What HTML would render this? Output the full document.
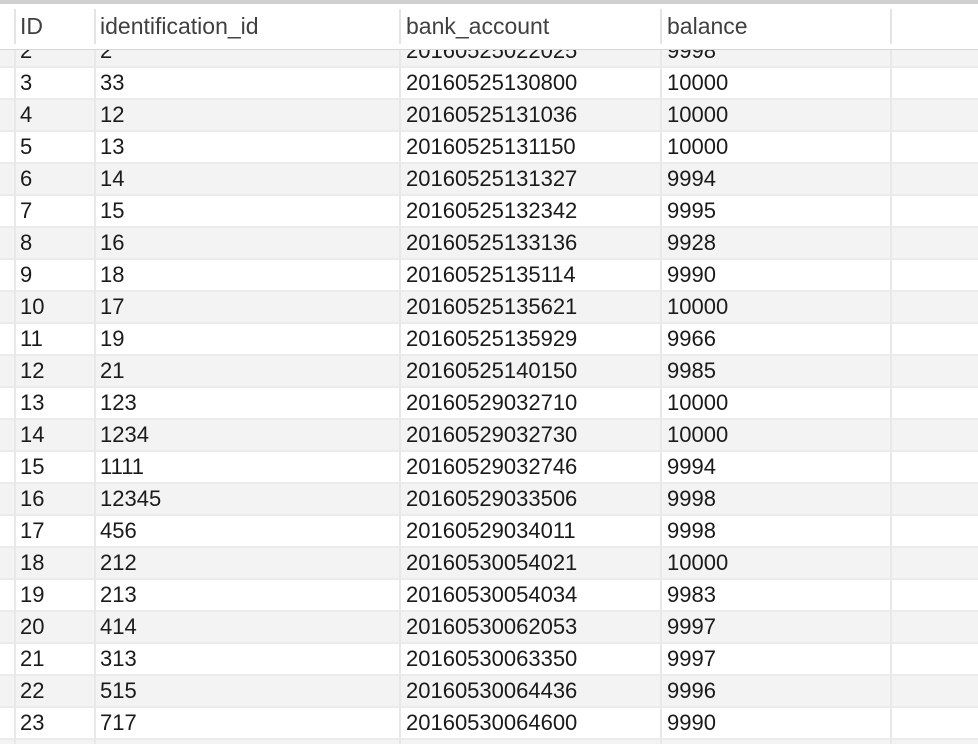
<!DOCTYPE html>
<html><head><style>
html,body{margin:0;width:978px;height:744px;overflow:hidden}
body{background:#fff;font-family:"Liberation Sans",Arial,sans-serif;font-size:22px;color:#1a1a1a;position:relative}
.top{position:absolute;left:0;top:0;width:978px;height:4px;background:#d0d0d0}
.hdr{position:absolute;left:0;top:4px;width:978px;height:45px;background:#fff;border-bottom:1px solid #d6d6d6}
.hs{position:absolute;top:5px;width:2px;height:35px;background:#e4e4e4}
.ht{position:absolute;top:9px;color:#404040;font-size:23px;line-height:26px}
.row{position:absolute;left:0;width:978px;height:30px}
.row span{position:absolute;top:3px;line-height:24px}
.g{background:#f3f3f3}
.vl{position:absolute;top:50px;width:2px;height:694px;background:#e8e8e8}
.sep{position:absolute;left:0;width:978px;height:2px;background:#ebebeb}
</style></head><body>
<div class="top"></div>
<div id="rows"></div>
<div class="hdr">
<div class="hs" style="left:14px"></div><div class="hs" style="left:94px"></div><div class="hs" style="left:399px"></div><div class="hs" style="left:660px"></div><div class="hs" style="left:890px"></div>
<div class="ht" style="left:20px">ID</div><div class="ht" style="left:100px">identification_id</div><div class="ht" style="left:406px">bank_account</div><div class="ht" style="left:667px">balance</div>
</div>
<script>
var d=[[2,2,"20160525022025",9998],[3,33,"20160525130800",10000],[4,12,"20160525131036",10000],[5,13,"20160525131150",10000],[6,14,"20160525131327",9994],[7,15,"20160525132342",9995],[8,16,"20160525133136",9928],[9,18,"20160525135114",9990],[10,17,"20160525135621",10000],[11,19,"20160525135929",9966],[12,21,"20160525140150",9985],[13,123,"20160529032710",10000],[14,1234,"20160529032730",10000],[15,1111,"20160529032746",9994],[16,12345,"20160529033506",9998],[17,456,"20160529034011",9998],[18,212,"20160530054021",10000],[19,213,"20160530054034",9983],[20,414,"20160530062053",9997],[21,313,"20160530063350",9997],[22,515,"20160530064436",9996],[23,717,"20160530064600",9990],["","","",""]];
var h="";
d.forEach(function(r,i){var top=36+i*32;var cls=(i%2==0)?"row g":"row";
h+='<div class="'+cls+'" style="top:'+top+'px"><span style="left:20px">'+r[0]+'</span><span style="left:100px">'+r[1]+'</span><span style="left:406px">'+r[2]+'</span><span style="left:667px">'+r[3]+'</span></div>';
if(i<22)h+='<div class="sep" style="top:'+(top+30)+'px"></div>';});
[14,94,399,660,890].forEach(function(x){h+='<div class="vl" style="left:'+x+'px"></div>'});
document.getElementById("rows").innerHTML=h;
</script>
</body></html>
